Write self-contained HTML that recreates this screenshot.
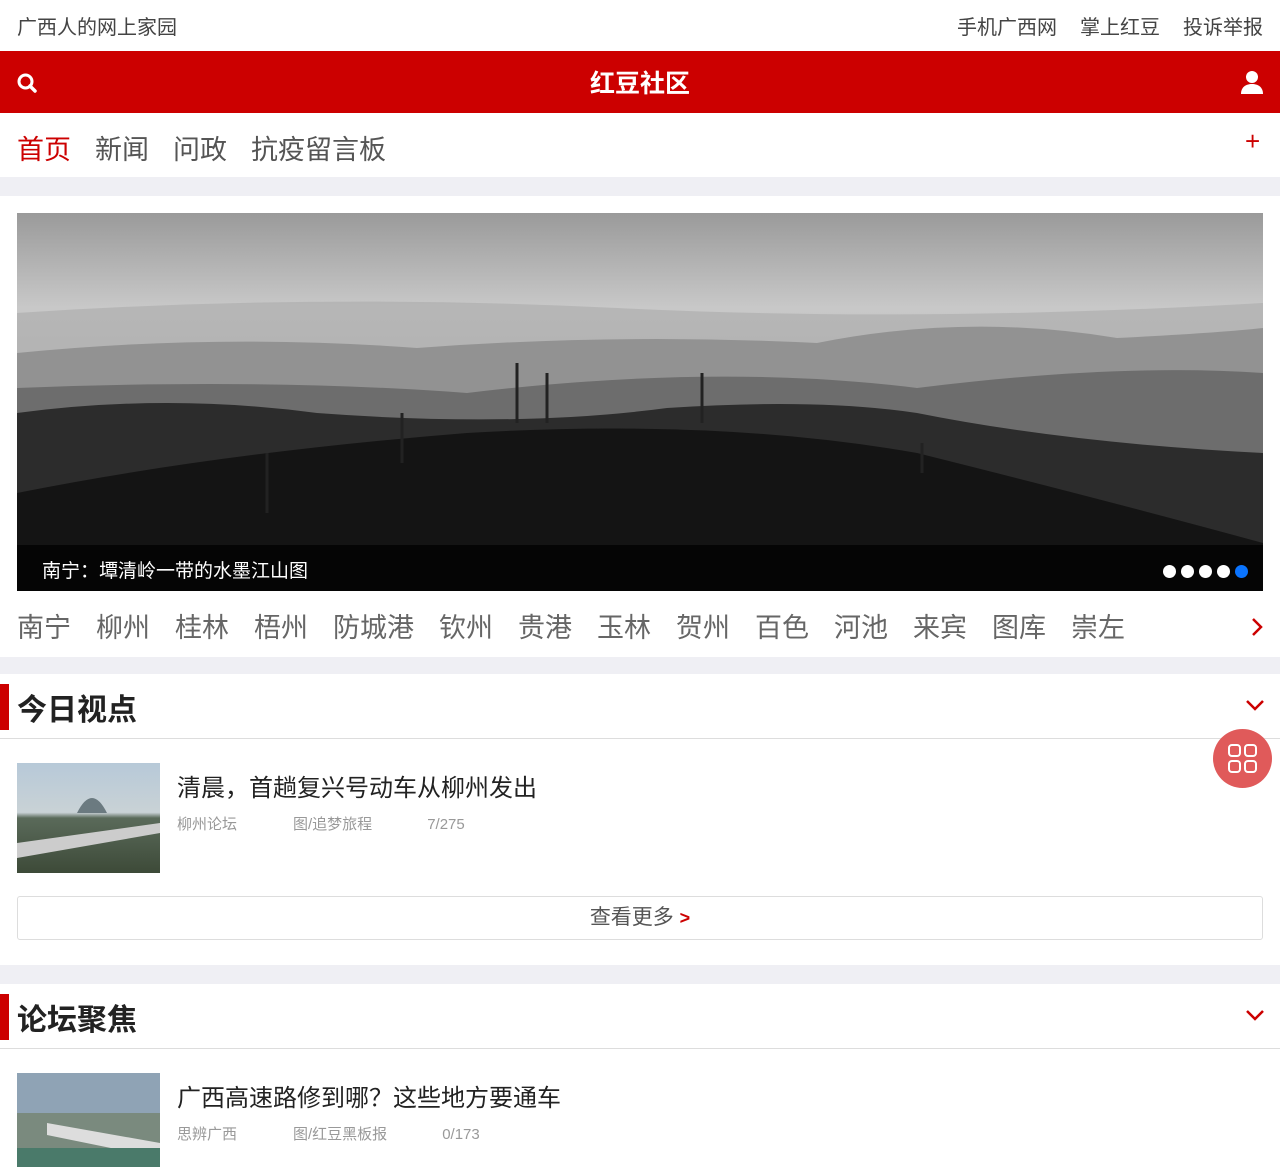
<!DOCTYPE html>
<html><head><meta charset="utf-8"><style>
*{margin:0;padding:0;box-sizing:border-box}
body{width:1280px;height:1167px;overflow:hidden;background:#fff;font-family:"Liberation Sans","Noto Sans CJK SC",sans-serif;color:#333;position:relative}
.a{position:absolute}
.gray{background:#efeff4}
</style></head><body>
<div class="a" style="left:17px;top:11px;font-size:20px;color:#444">广西人的网上家园</div>
<div class="a" style="right:17px;top:11px;font-size:20px;color:#444"><span>手机广西网</span><span style="margin-left:23px">掌上红豆</span><span style="margin-left:23px">投诉举报</span></div>
<div class="a" style="left:0;top:51px;width:1280px;height:62px;background:#cc0000"></div>
<svg class="a" style="left:16px;top:72px" width="22" height="22" viewBox="0 0 22 22"><circle cx="9.5" cy="9.5" r="6.5" fill="none" stroke="#fff" stroke-width="3"/><path d="M14 14l5 5" stroke="#fff" stroke-width="3.5" stroke-linecap="round"/></svg>
<div class="a" style="left:0;width:1280px;top:64px;text-align:center;font-size:25px;font-weight:bold;color:#fff">红豆社区</div>
<svg class="a" style="left:1240px;top:70px" width="24" height="24" viewBox="0 0 24 24"><circle cx="12" cy="7" r="6" fill="#fff"/><path d="M1 24c0-7 5-10 11-10s11 3 11 10z" fill="#fff"/></svg>
<div class="a" style="left:17px;top:128px;font-size:27px;color:#555"><span style="color:#cc0000">首页</span><span style="margin-left:24px">新闻</span><span style="margin-left:24px">问政</span><span style="margin-left:24px">抗疫留言板</span></div>
<div class="a" style="left:1245px;top:126px;font-size:26px;color:#cc0000">+</div>
<div class="a gray" style="left:0;top:177px;width:1280px;height:19px"></div>
<svg class="a" style="left:17px;top:213px" width="1246" height="378" viewBox="0 0 1246 378" preserveAspectRatio="none">
<defs><linearGradient id="sk" x1="0" y1="0" x2="0" y2="1"><stop offset="0" stop-color="#9a9a9a"/><stop offset="0.25" stop-color="#c8c8c8"/><stop offset="0.5" stop-color="#bdbdbd"/><stop offset="1" stop-color="#6a6a6a"/></linearGradient></defs>
<rect width="1246" height="378" fill="url(#sk)"/>
<path d="M0 100 Q300 80 600 95 T1246 90 V378 H0z" fill="#aaa" opacity=".6"/>
<path d="M0 140 Q200 120 400 135 Q600 120 800 130 Q950 100 1100 125 Q1200 120 1246 115 V378 H0z" fill="#8a8a8a" opacity=".8"/>
<path d="M0 175 Q250 165 450 180 Q700 150 900 175 Q1100 150 1246 160 V378 H0z" fill="#6d6d6d"/>
<path d="M0 200 Q150 180 300 200 Q500 215 650 195 Q800 185 900 200 Q1050 230 1246 240 V378 H0z" fill="#2c2c2c"/>
<path d="M0 280 Q200 240 450 220 Q700 205 900 240 Q1100 290 1246 330 V378 H0z" fill="#141414"/>
<rect y="332" width="1246" height="46" fill="#000" opacity=".75"/>
<g stroke="#222" stroke-width="3"><path d="M500 210V150M530 210V160M685 210V160M250 300V240M385 250V200M905 260V230"/></g>
</svg>
<div class="a" style="left:42px;top:556px;font-size:19px;color:#fff">南宁：墰清岭一带的水墨江山图</div>
<div class="a" style="left:1163px;top:565px;display:flex;gap:5px"><i style="width:13px;height:13px;border-radius:50%;background:#fff"></i><i style="width:13px;height:13px;border-radius:50%;background:#fff"></i><i style="width:13px;height:13px;border-radius:50%;background:#fff"></i><i style="width:13px;height:13px;border-radius:50%;background:#fff"></i><i style="width:13px;height:13px;border-radius:50%;background:#0a74ff"></i></div>
<div class="a" style="left:17px;top:606px;font-size:27px;color:#666;display:flex;gap:25px;white-space:nowrap"><span>南宁</span><span>柳州</span><span>桂林</span><span>梧州</span><span>防城港</span><span>钦州</span><span>贵港</span><span>玉林</span><span>贺州</span><span>百色</span><span>河池</span><span>来宾</span><span>图库</span><span>崇左</span></div>
<svg class="a" style="left:1250px;top:617px" width="14" height="20"><path d="M3 2l8 8-8 8" fill="none" stroke="#cc0000" stroke-width="2.5"/></svg>
<div class="a gray" style="left:0;top:657px;width:1280px;height:17px"></div>
<div class="a" style="left:0;top:684px;width:9px;height:46px;background:#cc0000"></div>
<div class="a" style="left:17px;top:685px;font-size:30px;font-weight:bold;color:#222">今日视点</div>
<svg class="a" style="left:1245px;top:698px" width="20" height="14"><path d="M2 3l8 8 8-8" fill="none" stroke="#cc0000" stroke-width="2.5"/></svg>
<div class="a" style="left:0;top:738px;width:1280px;height:1px;background:#ddd"></div>
<svg class="a" style="left:17px;top:763px" width="143" height="110"><defs><linearGradient id="p1" x1="0" y1="0" x2="0" y2="1"><stop offset="0" stop-color="#b7c9d8"/><stop offset=".45" stop-color="#c9d2d6"/><stop offset=".5" stop-color="#5a6a5a"/><stop offset="1" stop-color="#3d4a38"/></linearGradient></defs><rect width="143" height="110" fill="url(#p1)"/><path d="M60 50 Q75 20 90 50z" fill="#6b7a80"/><path d="M0 80 L143 60 L143 70 L0 95z" fill="#ccc"/></svg>
<div class="a" style="left:177px;top:768px;font-size:24px;color:#222">清晨，首趟复兴号动车从柳州发出</div>
<div class="a" style="left:177px;top:813px;font-size:15px;color:#999">柳州论坛<span style="margin-left:56px">图/追梦旅程</span><span style="margin-left:55px">7/275</span></div>
<div class="a" style="left:1213px;top:729px;width:59px;height:59px;border-radius:50%;background:#e05a5a"></div>
<svg class="a" style="left:1227px;top:743px" width="31" height="31"><g fill="none" stroke="#fff" stroke-width="2"><rect x="2" y="2" width="11" height="11" rx="3"/><rect x="18" y="2" width="11" height="11" rx="3"/><rect x="2" y="18" width="11" height="11" rx="3"/><rect x="18" y="18" width="11" height="11" rx="3"/></g></svg>
<div class="a" style="left:17px;top:896px;width:1246px;height:44px;border:1px solid #ddd;border-radius:3px;text-align:center;line-height:42px;font-size:21px;color:#555">查看更多 <span style="color:#cc0000;font-size:18px;font-weight:bold">&gt;</span></div>
<div class="a gray" style="left:0;top:965px;width:1280px;height:19px"></div>
<div class="a" style="left:0;top:994px;width:9px;height:46px;background:#cc0000"></div>
<div class="a" style="left:17px;top:995px;font-size:30px;font-weight:bold;color:#222">论坛聚焦</div>
<svg class="a" style="left:1245px;top:1008px" width="20" height="14"><path d="M2 3l8 8 8-8" fill="none" stroke="#cc0000" stroke-width="2.5"/></svg>
<div class="a" style="left:0;top:1048px;width:1280px;height:1px;background:#ddd"></div>
<svg class="a" style="left:17px;top:1073px" width="143" height="94"><rect width="143" height="94" fill="#8fa3b5"/><rect y="40" width="143" height="54" fill="#7a8a7e"/><path d="M30 50 L143 70 L143 85 L30 62z" fill="#ddd"/><rect y="75" width="143" height="19" fill="#4a7a6a"/></svg>
<div class="a" style="left:177px;top:1078px;font-size:24px;color:#222">广西高速路修到哪？这些地方要通车</div>
<div class="a" style="left:177px;top:1123px;font-size:15px;color:#999">思辨广西<span style="margin-left:56px">图/红豆黑板报</span><span style="margin-left:55px">0/173</span></div>
</body></html>
